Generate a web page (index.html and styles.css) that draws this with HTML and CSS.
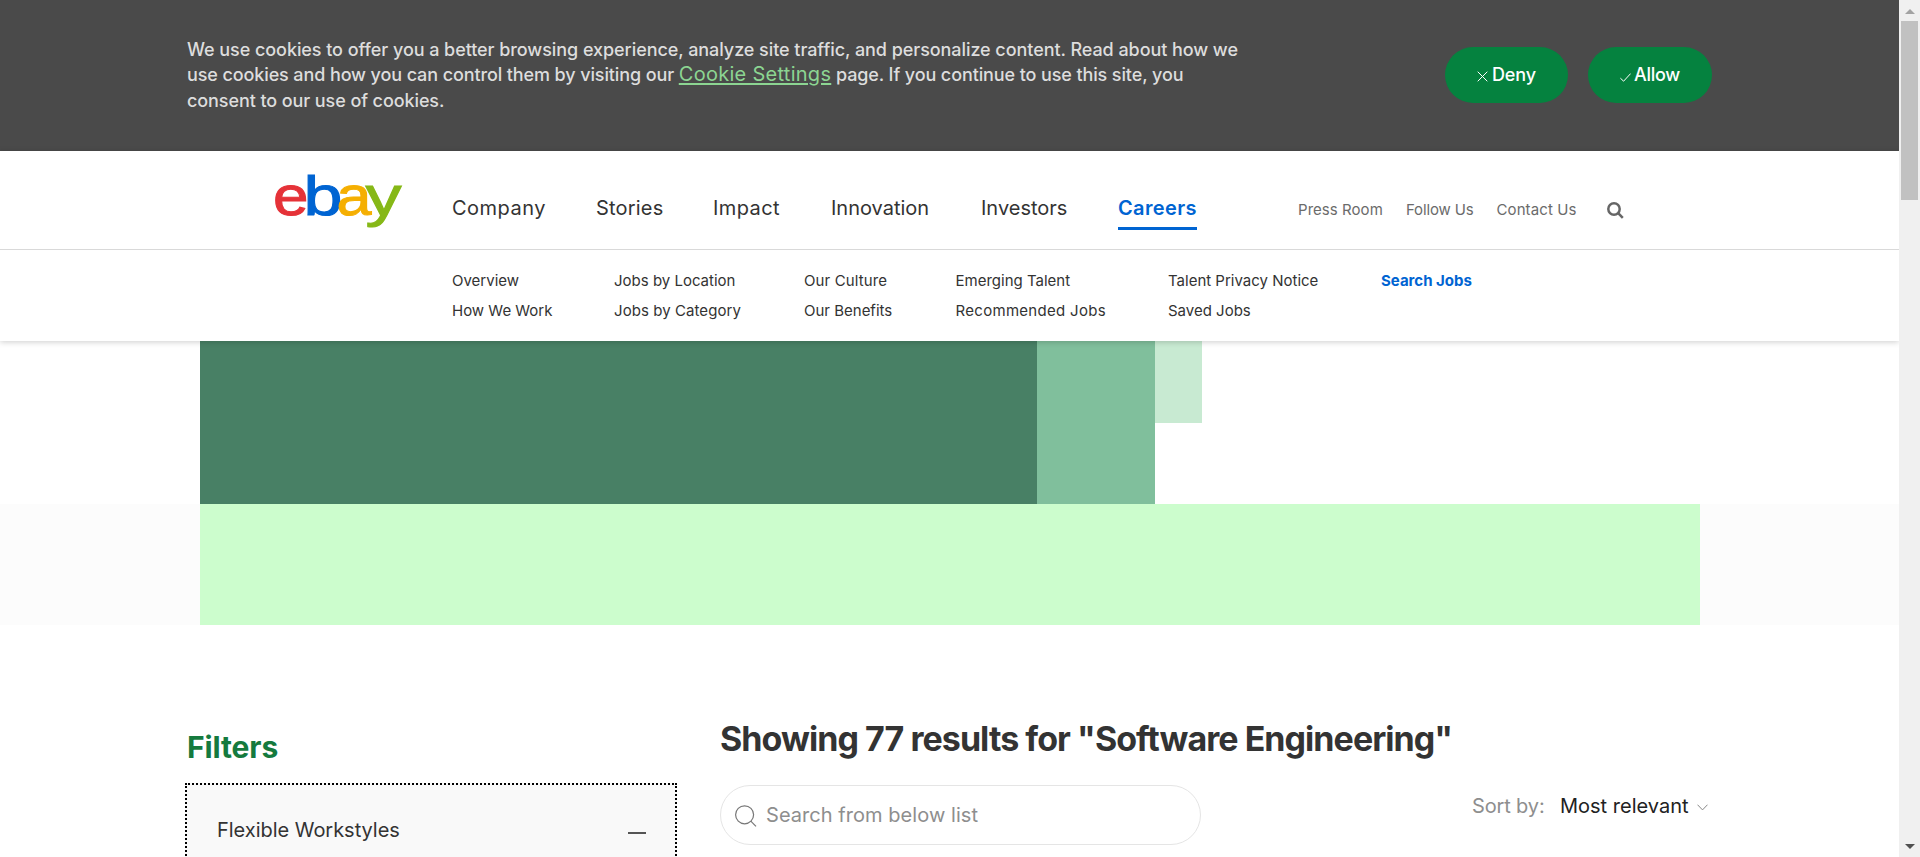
FILE: index.html
```html
<!DOCTYPE html>
<html lang="en">
<head>
<meta charset="utf-8">
<title>Software Engineering jobs | eBay Careers</title>
<link rel="stylesheet" href="styles.css">
</head>
<body>
<div class="page">
  <section class="cookie">
    <p class="cookie-text">
      <span class="line line-1">We use cookies to offer you a better browsing experience, analyze site traffic, and personalize content. Read about how we</span>
      <span class="line line-2">use cookies and how you can control them by visiting our <a class="cookie-link">Cookie Settings</a> page. If you continue to use this site, you</span>
      <span class="line line-3">consent to our use of cookies.</span>
    </p>
    <div class="cookie-actions">
      <button class="pill deny"><svg class="pill-icon" width="11" height="11" viewBox="0 0 11 11"><path d="M.7.7l9.6 9.6M10.3.7L.7 10.3"/></svg><span>Deny</span></button>
      <button class="pill allow"><svg class="pill-icon check" width="11" height="9" viewBox="0 0 11 9"><path d="M.4 5.2l3.2 3L10.6.6"/></svg><span>Allow</span></button>
    </div>
  </section>

  <header class="header">
    <div class="topnav">
      <svg class="logo" width="130" height="76" viewBox="0 0 130 76" role="img" aria-label="ebay">
        <text class="logo-e" x="0" y="55.5" textLength="35.5" lengthAdjust="spacingAndGlyphs">e</text>
        <text class="logo-b" x="30.5" y="55.5" textLength="39" lengthAdjust="spacingAndGlyphs">b</text>
        <text class="logo-a" x="63.5" y="55.5" textLength="35" lengthAdjust="spacingAndGlyphs">a</text>
        <text class="logo-y" x="92.5" y="55.5" textLength="36" lengthAdjust="spacingAndGlyphs">y</text>
      </svg>
      <nav class="primary">
        <a class="p-company">Company</a><a class="p-stories">Stories</a><a class="p-impact">Impact</a><a class="p-innovation">Innovation</a><a class="p-investors">Investors</a><a class="p-careers">Careers</a>
      </nav>
      <nav class="secondary">
        <a class="s-press">Press Room</a><a class="s-follow">Follow Us</a><a class="s-contact">Contact Us</a>
        <svg class="search-glyph" width="17" height="17" viewBox="0 0 17 17"><circle cx="7" cy="7" r="5.7"/><path d="M11.2 11.2l4.6 4.6"/></svg>
      </nav>
    </div>
    <div class="subnav">
      <div class="col c1"><a>Overview</a><a class="work">How We Work</a></div>
      <div class="col c2"><a>Jobs by Location</a><a class="cat">Jobs by Category</a></div>
      <div class="col c3"><a class="culture">Our Culture</a><a>Our Benefits</a></div>
      <div class="col c4"><a>Emerging Talent</a><a class="rec">Recommended Jobs</a></div>
      <div class="col c5"><a>Talent Privacy Notice</a><a>Saved Jobs</a></div>
      <div class="col c6"><a class="active">Search Jobs</a></div>
    </div>
  </header>

  <div class="hero"><div class="block dark"></div><div class="block mid"></div><div class="block light"></div></div>
  <div class="band"><div class="band-fill"></div></div>

  <main class="content">
    <aside class="filters">
      <h2>Filters</h2>
      <div class="filter-box"><span class="filter-name">Flexible Workstyles</span><span class="minus"></span></div>
    </aside>
    <section class="results">
      <h1>Showing 77 results for "Software Engineering"</h1>
      <div class="toolbar">
        <div class="search">
          <svg width="22" height="22" viewBox="0 0 22 22"><circle cx="9.6" cy="9.8" r="9"/><path d="M15.8 16.2l5.2 5.2"/></svg>
          <span>Search from below list</span>
        </div>
        <div class="sort"><span class="sort-label">Sort by:</span><span class="sort-value">Most relevant</span><svg width="11" height="7" viewBox="0 0 11 7"><path d="M.5.7l5 5.2 5-5.2"/></svg></div>
      </div>
    </section>
  </main>
</div>
<div class="scrollbar">
  <span class="arrow up"></span><span class="thumb"></span><span class="arrow down"></span>
</div>
</body>
</html>
```
FILE: styles.css
```css
* { box-sizing: border-box; }
body {
  margin: 0;
  height: 857px;
  overflow: hidden;
  display: flex;
  font-family: Inter, "Liberation Sans", sans-serif;
  color: #333;
  background: #fff;
}
.page { width: 1899px; height: 857px; overflow: hidden; flex: none; }

/* Cookie notice */
.cookie {
  height: 151px;
  background: #4a4a4a;
  display: flex;
  justify-content: space-between;
  padding: 36.5px 187px 0 187px;
}
.cookie-text { margin: 0; font-size: 18px; font-weight: 500; line-height: 25.7px; color: #ddd; }
.line { display: block; white-space: nowrap; height: 25.7px; }
.line-1 { letter-spacing: -.065px; }
.line-2 { letter-spacing: -.11px; }
.line-3 { letter-spacing: -.09px; }
.cookie-link {
  font-size: 20px;
  font-weight: 400;
  line-height: 1;
  letter-spacing: .28px;
  color: #8cd592;
  text-decoration: underline;
  text-decoration-thickness: 2px;
  text-underline-offset: 2px;
}
.cookie-actions { display: flex; gap: 20px; padding-top: 10.5px; }
.pill {
  display: flex;
  align-items: center;
  height: 56px;
  border: 0;
  border-radius: 28px;
  background: #05823f;
  color: #fff;
  font: 500 18px Inter, sans-serif;
  padding: 0 0 2px 32px;
  gap: 4px;
}
.deny { width: 123px; letter-spacing: -.12px; }
.allow { width: 124px; letter-spacing: -.27px; gap: 3px; }
.pill-icon { fill: none; stroke: #fff; stroke-width: 1; margin-top: 4px; }
.check { margin-top: 7px; }

/* Site header */
.header { position: relative; height: 190px; background: #fff; box-shadow: 0 1px 6px rgba(0, 0, 0, .2); }
.topnav { height: 99px; border-bottom: 1px solid #d9d9d9; display: flex; padding-left: 273px; }
.logo { margin-top: 8px; flex: none; font: 55px "Liberation Sans", Arial, sans-serif; }
.logo-e { fill: #e53238; stroke: #e53238; }
.logo-b { fill: #0064d2; stroke: #0064d2; }
.logo-a { fill: #f5af02; stroke: #f5af02; }
.logo-y { fill: #86b817; stroke: #86b817; }
.primary { display: flex; margin: 41px 0 0 49px; font-size: 20px; line-height: 32px; white-space: nowrap; }
.primary a { height: 38px; }
.p-company { width: 144px; letter-spacing: .5px; }
.p-stories { width: 117px; letter-spacing: .2px; }
.p-impact { width: 118px; letter-spacing: .41px; }
.p-innovation { width: 150px; }
.p-investors { width: 137px; }
.p-careers { width: 79px; letter-spacing: .38px; font-weight: 600; color: #0064d2; border-bottom: 3px solid #0064d2; }
.secondary { display: flex; margin: 43px 0 0 101px; font-size: 15px; line-height: 32px; color: #6b6b6b; white-space: nowrap; }
.s-press { width: 108px; letter-spacing: .05px; }
.s-follow { width: 90.5px; letter-spacing: -.15px; }
.s-contact { width: 110px; letter-spacing: .1px; }
.search-glyph { margin-top: 8px; fill: none; stroke: #666; stroke-width: 2.5; }
.subnav { display: flex; padding: 16px 0 0 452px; font-size: 15px; line-height: 30px; white-space: nowrap; }
.subnav a { display: block; }
.c1 { width: 162px; }
.c2 { width: 190px; }
.c3 { width: 151.5px; }
.c4 { width: 212.5px; }
.c5 { width: 213px; }
.cat { letter-spacing: .07px; }
.culture { letter-spacing: .11px; }
.rec { letter-spacing: .3px; }
.active { font-weight: 700; color: #0064d2; }

/* Hero blocks */
.hero { height: 163px; display: flex; align-items: flex-start; padding-left: 200px; }
.block { height: 163px; }
.dark { width: 837px; background: #488065; }
.mid { width: 118px; background: #80bf9c; }
.light { width: 47px; height: 82px; background: #c8ead2; }
.band { height: 121px; background: #fcfcfc; padding: 0 199px 0 200px; }
.band-fill { height: 121px; background: #ccfdcd; }

/* Results */
.content { display: flex; }
.filters { width: 492px; margin-left: 185px; padding-top: 103px; }
h2 { margin: 0 0 0 2px; font-size: 30px; font-weight: 700; line-height: 38px; letter-spacing: -.1px; color: #157a3e; }
.filter-box {
  height: 120px;
  margin-top: 17px;
  border: 2px dotted #000;
  background: #f9f9f9;
  display: flex;
  justify-content: space-between;
  padding: 32px 29px 0 30px;
}
.filter-name { font-size: 20px; line-height: 26px; letter-spacing: -.03px; }
.minus { width: 18px; height: 2px; margin-top: 15px; background: #555; }
.results { width: 988px; margin-left: 43px; padding-top: 93px; }
h1 { margin: 0; font-size: 34px; font-weight: 700; line-height: 42px; letter-spacing: -.95px; white-space: nowrap; }
.toolbar { display: flex; justify-content: space-between; margin-top: 25px; }
.search {
  width: 481px;
  height: 60px;
  border: 1px solid #e5e5e5;
  border-radius: 30px;
  display: flex;
  padding: 0 0 0 14px;
  font-size: 20px;
  line-height: 58px;
  letter-spacing: .05px;
  color: #8e8e8e;
}
.search svg { margin: 19px 9px 0 0; fill: none; stroke: #777; stroke-width: 1.2; }
.sort { display: flex; font-size: 20px; line-height: 26px; padding-top: 8px; }
.sort-label { width: 88px; letter-spacing: -.15px; color: #8e8e8e; }
.sort-value { width: 137px; color: #222; }
.sort svg { margin-top: 11px; fill: none; stroke: #888; stroke-width: 1; }

/* Scrollbar */
.scrollbar { width: 21px; height: 857px; background: #f0f0f0; display: flex; flex-direction: column; align-items: center; padding: 9px 0 8px; }
.arrow { border: 5px solid transparent; width: 0; height: 0; }
.up { border-top: 0; border-bottom-color: #a3a3a3; }
.thumb { width: 17px; height: 179px; margin-top: 7px; background: #c1c1c1; }
.down { border-bottom: 0; border-top-color: #505050; margin-top: auto; }
```
